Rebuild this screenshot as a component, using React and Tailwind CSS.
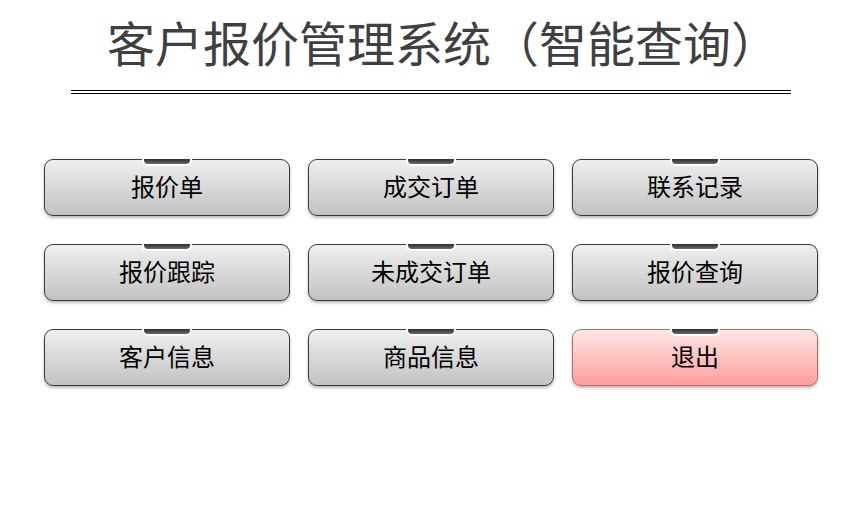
import React from 'react';

const items = [
  { label: '报价单' },
  { label: '成交订单' },
  { label: '联系记录' },
  { label: '报价跟踪' },
  { label: '未成交订单' },
  { label: '报价查询' },
  { label: '客户信息' },
  { label: '商品信息' },
  { label: '退出', danger: true },
];

function MenuButton({ label, danger }) {
  const tone = danger
    ? 'border-[#b86a6a] bg-gradient-to-b from-[#ffe6e6] to-[#ff9e9e]'
    : 'border-[#3a3a3a] bg-gradient-to-b from-[#efefef] to-[#c2c2c2]';
  return (
    <button
      className={`relative h-[57px] rounded-[9px] border ${tone} shadow-[0_2px_3px_rgba(0,0,0,0.28)] text-[24px] text-black flex items-center justify-center pb-[4px]`}
    >
      <div className="absolute top-[-1px] left-1/2 -translate-x-1/2 w-[50px] h-[7px] bg-white rounded-b-[5px] px-[2px] pb-[2px]">
        <div className="h-full rounded-b-[4px] bg-gradient-to-b from-[#2e2e2e] to-[#6a6a6a]" />
      </div>
      <span className="leading-none">{label}</span>
    </button>
  );
}

export default function App() {
  return (
    <div className="w-[864px] h-[526px] bg-white font-['Noto_Sans_CJK_SC','Noto_Sans',sans-serif]">
      <div className="pt-[12px] pl-[22px] text-center text-[48px] leading-[58px] text-[#3f3f3f]">
        客户报价管理系统（智能查询）
      </div>

      <div className="mt-[20px] mx-[71px] w-[720px] flex flex-col gap-[2px]">
        <div className="h-px bg-black" />
        <div className="h-px bg-black" />
      </div>

      <div className="mt-[65px] ml-[44px] grid grid-cols-[246px_246px_246px] gap-x-[18px] gap-y-[28px]">
        {items.map((it) => (
          <MenuButton key={it.label} label={it.label} danger={it.danger} />
        ))}
      </div>
    </div>
  );
}
